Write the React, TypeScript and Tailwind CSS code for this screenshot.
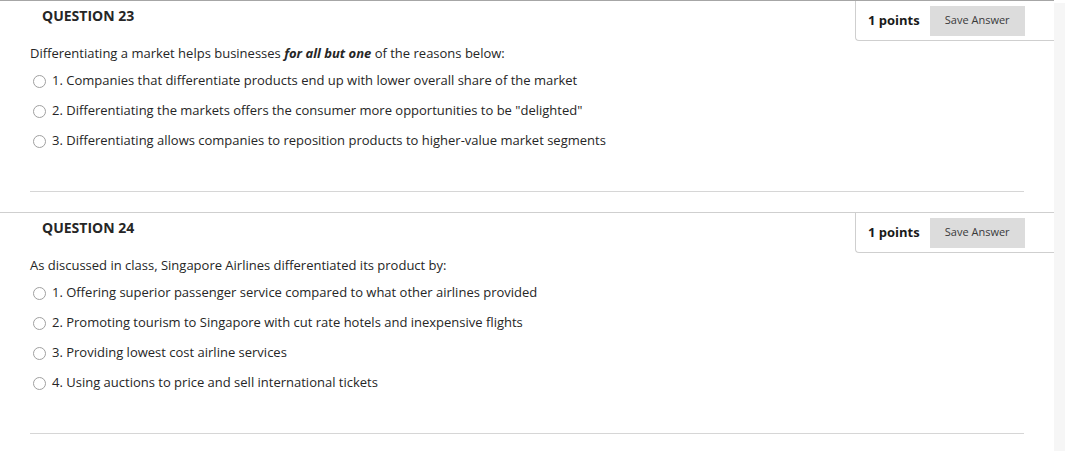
import React from 'react';

type Question = {
  number: number;
  points: number;
  prompt: React.ReactNode;
  options: string[];
};

const questions: Question[] = [
  {
    number: 23,
    points: 1,
    prompt: (
      <>
        Differentiating a market helps businesses <b className="italic font-bold">for all but one</b> of the reasons below:
      </>
    ),
    options: [
      '1. Companies that differentiate products end up with lower overall share of the market',
      '2. Differentiating the markets offers the consumer more opportunities to be "delighted"',
      '3. Differentiating allows companies to reposition products to higher-value market segments',
    ],
  },
  {
    number: 24,
    points: 1,
    prompt: 'As discussed in class, Singapore Airlines differentiated its product by:',
    options: [
      '1. Offering superior passenger service compared to what other airlines provided',
      '2. Promoting tourism to Singapore with cut rate hotels and inexpensive flights',
      '3. Providing lowest cost airline services',
      '4. Using auctions to price and sell international tickets',
    ],
  },
];

function QuestionBlock({ q, first }: { q: Question; first: boolean }) {
  return (
    <section className={first ? 'border-t border-[#a6a6a6]' : 'mt-5 border-t border-[#cfcfcf]'}>
      {/* Header */}
      <div className="flex items-start justify-between">
        <h3 className="pl-[42px] pt-[5px] text-[14px] font-bold leading-5 text-[#262626]">
          QUESTION {q.number}
        </h3>
        <div className="flex h-10 w-[199px] items-center rounded-bl-[4px] border-b border-l border-[#cfcfcf] pl-[12px]">
          <span className="text-[13px] font-bold text-[#1a1a1a]">{q.points} points</span>
          <button className="ml-[10px] h-[30px] w-[95px] bg-[#dcdcdc] text-[11px] text-[#3a3a3a]">
            Save Answer
          </button>
        </div>
      </div>

      {/* Prompt */}
      <p className="pl-[30px] pt-[2px] text-[13px] leading-5 text-[#262626]">{q.prompt}</p>

      {/* Options */}
      <ul className="mt-[3px]">
        {q.options.map((opt) => (
          <li key={opt} className="flex h-[30px] items-center gap-[6px] pl-[33px] text-[13px] text-[#262626]">
            <span className="h-[13px] w-[13px] shrink-0 rounded-full border border-[#a0a0a0] bg-white" />
            <span>{opt}</span>
          </li>
        ))}
      </ul>

      <div className="ml-[30px] mt-[35px] w-[994px] border-t border-[#d6d6d6]" />
    </section>
  );
}

export default function App() {
  return (
    <div className="flex h-[451px] w-full bg-white" style={{ fontFamily: '"Open Sans", "Liberation Sans", sans-serif' }}>
      <div className="w-[1054px]">
        {questions.map((q, i) => (
          <QuestionBlock key={q.number} q={q} first={i === 0} />
        ))}
      </div>
      <div className="mt-[3px] flex-1 bg-[#f6f6f6]" />
    </div>
  );
}
